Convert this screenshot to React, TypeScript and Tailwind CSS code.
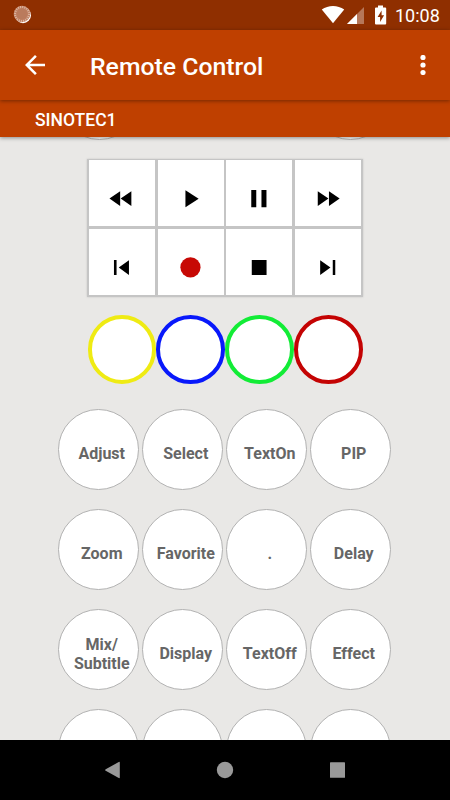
type IconName =
    | "rewind"
    | "play"
    | "pause"
    | "forward"
    | "previous"
    | "record"
    | "stop"
    | "next"

const mediaKeys: IconName[] = [
    "rewind",
    "play",
    "pause",
    "forward",
    "previous",
    "record",
    "stop",
    "next",
]

const colorKeys = [
    { name: "Yellow", border: "border-[#efeb13]" },
    { name: "Blue", border: "border-[#0818fb]" },
    { name: "Green", border: "border-[#12ec36]" },
    { name: "Red", border: "border-[#c40303]" },
]

const functionKeys = [
    "Adjust",
    "Select",
    "TextOn",
    "PIP",
    "Zoom",
    "Favorite",
    ".",
    "Delay",
    "Mix/\nSubtitle",
    "Display",
    "TextOff",
    "Effect",
    "",
    "",
    "",
    "",
]

// 66x66 glyphs, one per media key
function MediaIcon({ name }: { name: IconName }) {
    return (
        <svg viewBox="0.6 0 66 66" className="h-full w-full" fill="#000">
            {name === "rewind" && <path d="M21 38.6 31.7 31.2V46ZM32.2 38.6 42.9 31.2V46Z" />}
            {name === "play" && <path d="M28 30.3V47.2L41.2 38.7Z" />}
            {name === "pause" && <path d="M25.8 30h5v17.2h-5ZM36 30h5v17.2h-5Z" />}
            {name === "forward" && <path d="M23.3 31.2 34 38.6 23.3 46ZM34.5 31.2 45.2 38.6 34.5 46Z" />}
            {name === "previous" && <path d="M25.5 31h2.6v15h-2.6ZM40.5 31.2V46L30.3 38.6Z" />}
            {name === "record" && <circle cx="33" cy="38.3" r="10.1" fill="#c70905" />}
            {name === "stop" && <path d="M26.3 31h14.8v15H26.3Z" />}
            {name === "next" && <path d="M25.7 31.2 36 38.6 25.7 46ZM38.3 31h2.5v15h-2.5Z" />}
        </svg>
    )
}

function StatusBar() {
    return (
        <div className="flex h-[30px] shrink-0 items-center bg-[#8f2f00] text-white">
            <svg viewBox="0 0 20 20" className="ml-[13px] h-5 w-5">
                <circle cx="10" cy="10.2" r="8" fill="#fff" />
                <circle cx="9" cy="9" r="8.3" fill="#c08164" />
                <circle cx="9" cy="9" r="7" fill="none" stroke="#dcb8a4" strokeWidth="2" strokeDasharray="1 1.2" />
                <circle cx="9" cy="9" r="5.4" fill="#ba7b5d" />
            </svg>
            <svg viewBox="0 0 70 22" className="ml-auto h-[22px] w-[70px]" fill="#fff">
                <path d="M.8 5.6C7.2.7 16.8.7 23.2 5.6L12 19.3Z" />
                <path d="M43 3v17H26Z" fillOpacity=".35" />
                <path d="M36 10v10H26Z" />
                <path
                    fillRule="evenodd"
                    d="M57 1.6h5v2h2.2q1 0 1 1v15q0 1-1 1H55q-1 0-1-1v-15q0-1 1-1h2ZM60.6 6.6 56.6 13h2.5v5l4-6.8h-2.5Z"
                />
            </svg>
            <span className="mr-[10px] ml-[4px] w-[45px] pt-px text-[18px] leading-[30px] whitespace-nowrap">10:08</span>
        </div>
    )
}

function AppBar() {
    return (
        <header className="relative z-20 flex h-[70px] shrink-0 items-center bg-[#bf4000] text-white shadow-[0_1px_4px_rgba(0,0,0,0.4)]">
            <button aria-label="Back" className="ml-[25px]">
                <svg viewBox="0 0 20 20" className="h-5 w-5" fill="#fff">
                    <path d="M20 8.75H4.8l7-7L10 0 0 10l10 10 1.8-1.8-7-6.95H20Z" />
                </svg>
            </button>
            <h1 className="ml-[45px] pt-[3px] text-[24.8px] leading-[30px] font-medium">Remote Control</h1>
            <button aria-label="More options" className="mr-[24.5px] ml-auto">
                <svg viewBox="0 0 6 20" className="h-5 w-[6px]" fill="#fff">
                    <circle cx="3" cy="2.5" r="2.6" />
                    <circle cx="3" cy="10" r="2.6" />
                    <circle cx="3" cy="17.5" r="2.6" />
                </svg>
            </button>
        </header>
    )
}

function NavigationBar() {
    return (
        <nav className="flex h-[60px] shrink-0 items-center justify-center bg-black">
            <svg viewBox="0 0 450 60" className="h-[60px] w-[450px]" fill="#999">
                <path d="M105.7 29.2 118.8 22q1-.5 1 .6v14.8q0 1.1-1 .6L105.7 30.8q-1.2-.8 0-1.6Z" />
                <circle cx="225" cy="30" r="8.2" />
                <rect x="330" y="22.2" width="15" height="15.6" rx=".6" />
            </svg>
        </nav>
    )
}

export default function App() {
    return (
        <div className="flex h-[800px] w-[450px] flex-col overflow-hidden bg-[#e9e8e6] font-['Roboto',sans-serif]">
            <StatusBar />
            <AppBar />
            <div className="relative z-10 h-[37px] shrink-0 bg-[#bf4000] pl-[35px] text-[17.5px] leading-[40px] font-medium text-white shadow-[0_1px_4px_rgba(0,0,0,0.4)]">
                SINOTEC1
            </div>

            <main className="flex min-h-0 flex-1 flex-col items-center overflow-hidden">
                {/* row that is scrolled almost out of view */}
                <div className="flex h-[22px] w-[332px] shrink-0 items-start justify-between">
                    <div className="-mt-[78px] h-[81px] w-[81px] rounded-full border border-[#b5b5b5] bg-white" />
                    <div className="-mt-[78px] h-[81px] w-[81px] rounded-full border border-[#b5b5b5] bg-white" />
                </div>

                <div className="grid h-[138px] w-[276px] shrink-0 grid-cols-4 grid-rows-2 gap-x-[2.5px] gap-y-[3px] bg-[#c5c5c5] px-[2px] pt-px pb-[2px] shadow-[0_0_2px_rgba(0,0,0,0.15)]">
                    {mediaKeys.map((key) => (
                        <button key={key} aria-label={key} className="min-h-0 min-w-0 bg-white">
                            <MediaIcon name={key} />
                        </button>
                    ))}
                </div>

                <div className="mt-[18px] flex h-[69px] shrink-0">
                    {colorKeys.map((key) => (
                        <button
                            key={key.name}
                            aria-label={key.name}
                            className={`h-[68.75px] w-[68.75px] rounded-full border-4 bg-white ${key.border}`}
                        />
                    ))}
                </div>

                <div className="mt-[25px] mr-[1px] grid shrink-0 grid-cols-4 gap-x-[3px] gap-y-[19px]">
                    {functionKeys.map((label, index) => (
                        <button
                            key={index}
                            className="flex h-[81px] w-[81px] items-center justify-center rounded-full border border-[#b2b2b2] bg-white pt-[8px] pl-[6.5px] text-[16px] leading-[19px] font-bold whitespace-pre text-[#666]"
                        >
                            {label}
                        </button>
                    ))}
                </div>
            </main>

            <NavigationBar />
        </div>
    )
}
